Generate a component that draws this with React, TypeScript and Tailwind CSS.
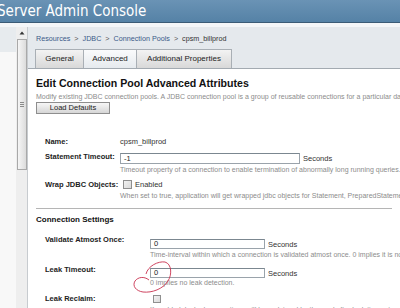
export default function App() {
  const label = "font-bold text-[7.5px] leading-[9px] text-[#222] whitespace-nowrap";
  const help = "text-[7px] leading-[9px] text-[#8c8c8c] whitespace-nowrap";
  const input =
    "bg-white border border-[#9aa3ab] border-t-[#7b8790] text-[7.5px] leading-[8px] pl-[3px] flex items-center text-[#222]";
  const checkbox =
    "border border-[#8f8f8f] bg-gradient-to-br from-[#f2f2f2] to-[#dadada]";
  return (
    <div className="relative w-[400px] h-[308px] overflow-hidden bg-white font-['Liberation_Sans',Arial,sans-serif] text-[#222]">
      {/* header */}
      <div className="h-[23px] bg-gradient-to-b from-[#6a93b5] to-[#5582a6] border-b border-[#3b5b76] overflow-hidden">
        <div className="-ml-[3px] pt-[1px] text-[15px] leading-[20px] text-white font-['DejaVu_Sans_Condensed','DejaVu_Sans',sans-serif] [font-stretch:condensed] whitespace-nowrap">
          Server Admin Console
        </div>
      </div>
      <div className="h-[4px] bg-[#f4f6f8]" />
      <div className="flex h-[281px]">
        {/* left pane */}
        <div className="w-[16px] flex flex-col">
          <div className="h-[25px] bg-[#e7ebee]" />
          <div className="flex-1 bg-[#f8f8f8]" />
        </div>
        {/* scrollbar */}
        <div className="w-[12px] bg-[#eeeeee] border-r border-[#c7cbcf] flex flex-col items-center">
          <svg width="6" height="4" viewBox="0 0 6 4" className="mt-[4px]">
            <path d="M3 0.5 L5.5 3.5 L0.5 3.5 Z" fill="#333" />
          </svg>
          <div className="mt-[4px] w-[10px] h-[131px] border border-[#a9a9a9] bg-gradient-to-r from-[#f6f6f6] to-[#dcdcdc] flex flex-col items-center justify-center gap-[1px]">
            <div className="w-[4px] h-[1px] bg-[#8a8a8a]" />
            <div className="w-[4px] h-[1px] bg-[#8a8a8a]" />
            <div className="w-[4px] h-[1px] bg-[#8a8a8a]" />
          </div>
        </div>
        {/* main */}
        <div className="flex-1 min-w-0 overflow-hidden">
          <div className="h-[42px] bg-[#e5e9ed] border-b border-[#a3aab1]">
            <div className="pl-[8px] pt-[7px] text-[7.2px] leading-[9px] text-[#3a5a88] whitespace-nowrap flex">
              <span>Resources</span>
              <span className="mx-[4px] text-[#555]">&gt;</span>
              <span>JDBC</span>
              <span className="mx-[4px] text-[#555]">&gt;</span>
              <span>Connection Pools</span>
              <span className="mx-[4px] text-[#555]">&gt;</span>
              <span className="text-[#333]">cpsm_billprod</span>
            </div>
            <div className="mt-[6px] ml-[7px] flex h-[19px] text-[8px] text-[#222]">
              <div className="w-[49px] flex items-center justify-center border border-b-0 border-[#a9afb5] bg-gradient-to-b from-[#f3f3f3] to-[#d8d8d8]">
                General
              </div>
              <div className="w-[53px] flex items-center justify-center border-t border-r border-[#a9afb5] bg-gradient-to-b from-[#fafbfc] to-[#e6eaee]">
                Advanced
              </div>
              <div className="w-[95px] flex items-center justify-center border-t border-r border-[#a9afb5] bg-gradient-to-b from-[#f3f3f3] to-[#d8d8d8]">
                Additional Properties
              </div>
            </div>
          </div>
          <div className="px-[8px]">
            <div className="mt-[8px] font-bold text-[10.6px] leading-[12px] text-[#111] whitespace-nowrap">
              Edit Connection Pool Advanced Attributes
            </div>
            <div className={`mt-[3px] ${help}`}>
              Modify existing JDBC connection pools. A JDBC connection pool is a group of reusable connections for a particular database.
            </div>
            <div className="mt-[1px] w-[74px] h-[12px] border border-[#8e8e8e] bg-gradient-to-b from-[#f7f7f7] to-[#d6d6d6] flex items-center justify-center text-[7.5px] text-[#222]">
              Load Defaults
            </div>

            <div className="ml-[9px]">
              <div className="mt-[23px] flex">
                <div className={`w-[75px] ${label}`}>Name:</div>
                <div className="text-[7.5px] leading-[9px] text-[#333]">cpsm_billprod</div>
              </div>
              <div className="mt-[6px] flex">
                <div className={`w-[75px] ${label}`}>Statement Timeout:</div>
                <div className="flex-1 min-w-0">
                  <div className="mt-[1px] flex items-center">
                    <div className={`w-[180px] h-[11px] ${input}`}>-1</div>
                    <span className="ml-[3px] text-[7.5px] leading-[9px] text-[#333]">Seconds</span>
                  </div>
                  <div className={`mt-[1px] ${help}`}>
                    Timeout property of a connection to enable termination of abnormally long running queries. -1 implies no timeout.
                  </div>
                </div>
              </div>
              <div className="mt-[6px] flex">
                <div className={`w-[75px] ${label}`}>Wrap JDBC Objects:</div>
                <div className="flex-1 min-w-0">
                  <div className="flex items-center">
                    <div className={`ml-[3px] w-[9px] h-[9px] ${checkbox}`} />
                    <span className="ml-[3px] text-[7.5px] leading-[9px] text-[#333]">Enabled</span>
                  </div>
                  <div className={`mt-[2px] ${help}`}>
                    When set to true, application will get wrapped jdbc objects for Statement, PreparedStatement, CallableStatement, ResultSet.
                  </div>
                </div>
              </div>
            </div>

            <div className="mt-[8px] h-[1px] bg-[#b5b5b5]" />
            <div className="mt-[6px] font-bold text-[8px] leading-[10px] text-[#111]">Connection Settings</div>

            <div className="ml-[9px]">
              <div className="mt-[10px] flex">
                <div className={`w-[105px] ${label}`}>Validate Atmost Once:</div>
                <div className="flex-1 min-w-0">
                  <div className="mt-[4px] flex items-center">
                    <div className={`w-[115px] h-[10px] ${input}`}>0</div>
                    <span className="ml-[3px] text-[7.5px] leading-[9px] text-[#333]">Seconds</span>
                  </div>
                  <div className={`mt-[1px] ${help}`}>
                    Time-interval within which a connection is validated atmost once. 0 implies it is not validated.
                  </div>
                </div>
              </div>
              <div className="mt-[6px] flex">
                <div className={`w-[105px] ${label}`}>Leak Timeout:</div>
                <div className="flex-1 min-w-0">
                  <div className="mt-[3px] flex items-center">
                    <div className={`w-[115px] h-[10px] ${input}`}>0</div>
                    <span className="ml-[3px] text-[7.5px] leading-[9px] text-[#333]">Seconds</span>
                  </div>
                  <div className={help}>0 implies no leak detection.</div>
                </div>
              </div>
              <div className="mt-[7px] flex">
                <div className={`w-[105px] ${label}`}>Leak Reclaim:</div>
                <div className="flex-1 min-w-0">
                  <div className={`mt-[1px] ml-[3px] w-[8px] h-[8px] ${checkbox}`} />
                  <div className={`mt-[2px] ${help}`}>
                    If enabled, leaked connections will be reclaimed by the pool after leak timeout occurs.
                  </div>
                </div>
              </div>
            </div>
          </div>
        </div>
      </div>

      <svg
        className="absolute left-0 top-0 pointer-events-none"
        width="400"
        height="308"
        viewBox="0 0 400 308"
      >
        <path
          d="M146 274 C148 266, 158 261, 165 262 C172 264, 172 275, 168 281 C163 289, 152 293, 143 292 C136 291, 132 286, 135 281 C138 277, 144 276, 149 280"
          fill="none"
          stroke="#c8304e"
          strokeWidth="0.9"
        />
      </svg>
    </div>
  );
}
